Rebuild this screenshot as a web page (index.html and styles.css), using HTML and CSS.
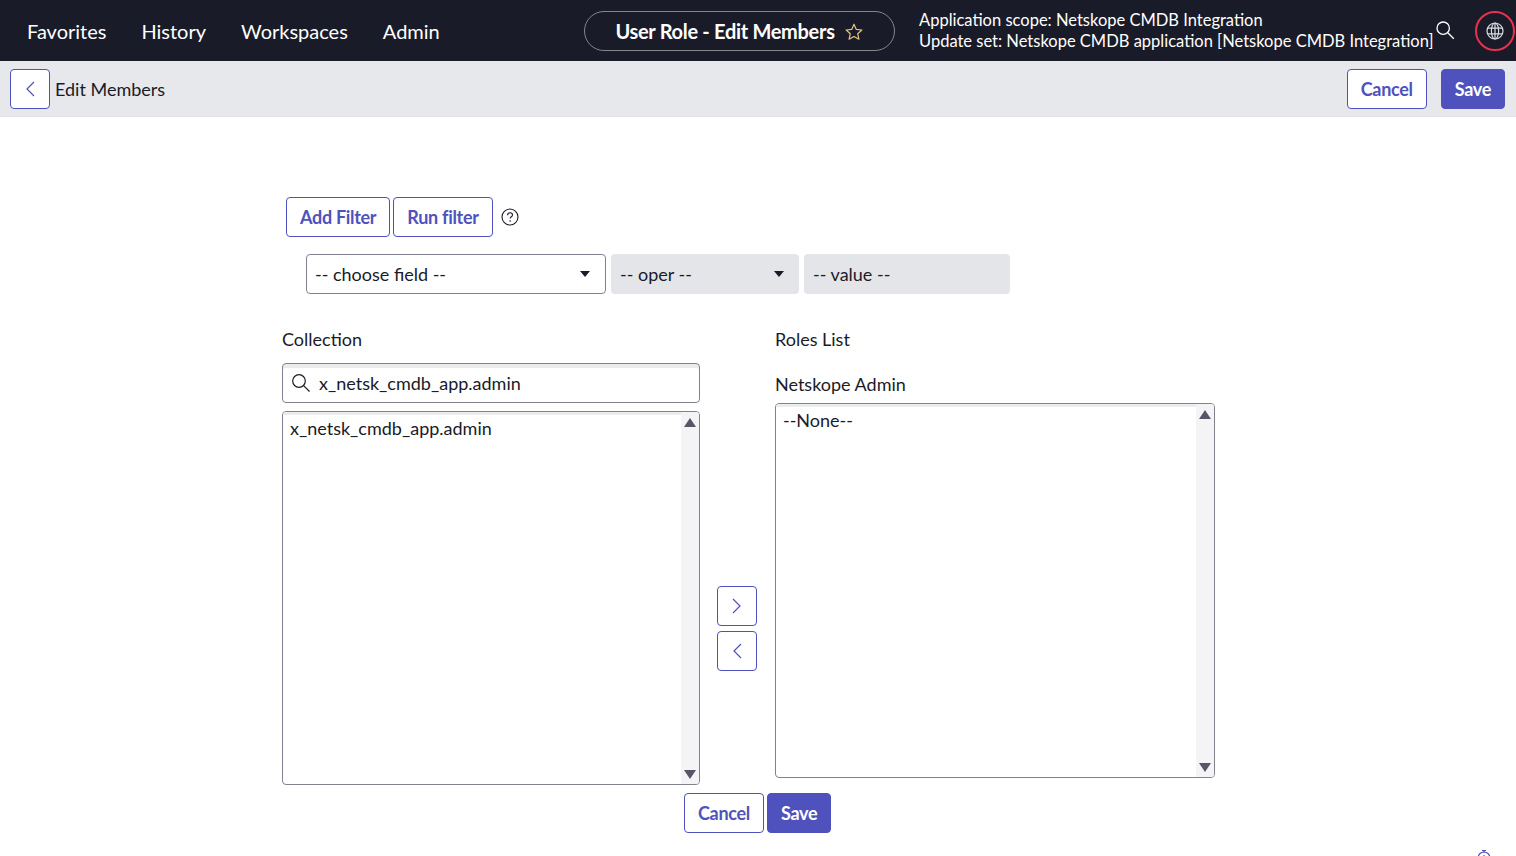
FILE: index.html
```html
<!DOCTYPE html>
<html lang="en">
<head>
    <meta charset="UTF-8">
    <meta name="viewport" content="width=device-width, initial-scale=1.0">
    <title>User Role - Edit Members</title>
    <link rel="stylesheet" href="styles.css">
</head>
<body>
    <header class="topbar">
        <nav class="topnav">
            <a class="topnav-item">Favorites</a>
            <a class="topnav-item">History</a>
            <a class="topnav-item">Workspaces</a>
            <a class="topnav-item">Admin</a>
        </nav>
        <div class="title-pill">
            <span>User Role - Edit Members</span>
            <svg class="star" width="20" height="20" viewBox="0 0 20 20"><path d="M10 2.2l2.3 5.2 5.6.6-4.2 3.7 1.2 5.5-4.9-2.8-4.9 2.8 1.2-5.5L2.1 8l5.6-.6z" fill="none" stroke="#e3c27e" stroke-width="1.2" stroke-linejoin="round"/></svg>
        </div>
        <div class="scope">
            <div>Application scope: Netskope CMDB Integration</div>
            <div>Update set: Netskope CMDB application [Netskope CMDB Integration]</div>
        </div>
        <svg class="top-search" width="20" height="20" viewBox="0 0 20 20"><circle cx="8.2" cy="8.2" r="6.2" fill="none" stroke="#fff" stroke-width="1.3"/><path d="M12.8 12.8l6 6" stroke="#fff" stroke-width="1.3"/></svg>
        <div class="globe-ring">
            <svg width="18" height="18" viewBox="0 0 18 18" fill="none" stroke="#dcdce0" stroke-width="1.2"><circle cx="9" cy="9" r="8"/><ellipse cx="9" cy="9" rx="3.6" ry="8"/><path d="M1.6 6.2h14.8M1.6 11.8h14.8M9 1v16"/></svg>
        </div>
    </header>

    <div class="subbar">
        <button class="btn btn-icon"><svg width="12" height="16" viewBox="0 0 12 16"><path d="M10 1L3 8l7 7" fill="none" stroke="#4f52bd" stroke-width="1.2"/></svg></button>
        <span class="subbar-title">Edit Members</span>
        <div class="subbar-actions">
            <button class="btn">Cancel</button>
            <button class="btn btn-primary">Save</button>
        </div>
    </div>

    <main class="content">
        <div class="filter-buttons">
            <button class="btn">Add Filter</button>
            <button class="btn">Run filter</button>
            <svg class="help" width="18" height="18" viewBox="0 0 18 18"><circle cx="9" cy="9" r="8" fill="none" stroke="#1a1b28" stroke-width="1.1"/><path d="M6.6 7.2c0-1.5 1.1-2.4 2.5-2.4s2.4.9 2.4 2.1c0 1.800-2.400 1.800-2.400 3.700" fill="none" stroke="#1a1b28" stroke-width="1.1"/><circle cx="9.100" cy="13" r=".8" fill="#1a1b28"/></svg>
        </div>

        <div class="filter-row">
            <div class="field field-choose"><span>-- choose field --</span><i class="caret"></i></div>
            <div class="field field-oper"><span>-- oper --</span><i class="caret"></i></div>
            <div class="field field-value"><span>-- value --</span></div>
        </div>

        <div class="slush">
            <div class="slush-col">
                <div class="slush-label">Collection</div>
                <div class="search-box">
                    <svg width="20" height="20" viewBox="0 0 20 20"><circle cx="8" cy="8" r="6.300" fill="none" stroke="#1a1b28" stroke-width="1.2"/><path d="M12.600 12.600l5.900 5.900" stroke="#1a1b28" stroke-width="1.2"/></svg>
                    <span>x_netsk_cmdb_app.admin</span>
                </div>
                <div class="listbox">
                    <div class="listbox-items">x_netsk_cmdb_app.admin</div>
                    <div class="scroll"><i class="arrow-up"></i><i class="arrow-down"></i></div>
                </div>
            </div>

            <div class="slush-move">
                <button class="btn btn-icon"><svg width="12" height="16" viewBox="0 0 12 16"><path d="M2 1l7 7-7 7" fill="none" stroke="#4f52bd" stroke-width="1.2"/></svg></button>
                <button class="btn btn-icon"><svg width="12" height="16" viewBox="0 0 12 16"><path d="M10 1L3 8l7 7" fill="none" stroke="#4f52bd" stroke-width="1.2"/></svg></button>
            </div>

            <div class="slush-col">
                <div class="slush-label">Roles List</div>
                <div class="slush-name">Netskope Admin</div>
                <div class="listbox listbox-tall">
                    <div class="listbox-items">--None--</div>
                    <div class="scroll"><i class="arrow-up"></i><i class="arrow-down"></i></div>
                </div>
            </div>
        </div>

        <div class="form-actions">
            <button class="btn">Cancel</button>
            <button class="btn btn-primary">Save</button>
        </div>
    </main>

    <svg class="timer" width="16" height="16" viewBox="0 0 16 16" fill="none" stroke="#4f52bd" stroke-width="1.200"><circle cx="8" cy="9" r="6"/><path d="M6 1.500h4M8 1.500v2M8 6v3"/></svg>
</body>
</html>
```

FILE: styles.css
```css
html, body {
    height: 100%;
    overflow: hidden;
}
body {
    margin: 0;
    font-family: Lato, "Open Sans", sans-serif;
    font-size: 18px;
    color: #1a1b28;
    background-color: #ffffff;
}
.topbar {
    display: flex;
    align-items: center;
    height: 61px;
    background-color: #1a1b28;
    color: #ffffff;
    padding-left: 27px;
    box-sizing: border-box;
}
.topnav {
    display: flex;
    gap: 35px;
    width: 557px;
    font-size: 20px;
}
.title-pill {
    display: flex;
    align-items: center;
    justify-content: center;
    gap: 9px;
    width: 311px;
    height: 40px;
    box-sizing: border-box;
    border: 1px solid #85858e;
    border-radius: 20px;
    font-size: 20px;
    font-weight: 700;
    letter-spacing: -0.3px;
}
.star {
    margin-top: 3px;
}
.scope {
    margin-left: 24px;
    width: 516px;
    font-size: 16.5px;
    line-height: 21px;
    white-space: nowrap;
}
.top-search {
    margin-top: -2px;
}
.globe-ring {
    display: flex;
    align-items: center;
    justify-content: center;
    flex: none;
    width: 40px;
    height: 40px;
    margin-left: 20px;
    box-sizing: border-box;
    border: 2px solid #e8314f;
    border-radius: 50%;
}
.subbar {
    display: flex;
    align-items: center;
    height: 56px;
    padding: 0 11px 0 10px;
    box-sizing: border-box;
    background-color: #e6e8ec;
    border-bottom: 1px solid #e0e2e6;
}
.subbar-title {
    margin-left: 5px;
}
.subbar-actions {
    display: flex;
    gap: 14px;
    margin-left: auto;
}
.btn {
    height: 40px;
    padding: 0 13px;
    box-sizing: border-box;
    background-color: #ffffff;
    border: 1px solid #4f52bd;
    border-radius: 4px;
    color: #4f52bd;
    font-family: inherit;
    font-size: 18px;
    font-weight: 700;
    letter-spacing: -0.3px;
}
.btn-primary {
    background-color: #4f52bd;
    color: #ffffff;
}
.btn-icon {
    display: flex;
    align-items: center;
    justify-content: center;
    width: 40px;
    padding: 0;
}
.content {
    padding: 80px 0 0 282px;
}
.filter-buttons {
    display: flex;
    align-items: center;
    gap: 3px;
    margin-left: 4px;
}
.help {
    margin-left: 5px;
}
.filter-row {
    display: flex;
    gap: 5px;
    margin: 17px 0 0 24px;
}
.field {
    display: flex;
    align-items: center;
    justify-content: space-between;
    height: 40px;
    padding: 0 15px 0 8px;
    box-sizing: border-box;
    border-radius: 4px;
    background-color: #e4e5e9;
}
.field-choose {
    width: 300px;
    background-color: #ffffff;
    border: 1px solid #80838f;
}
.field-oper {
    width: 188px;
    padding-left: 9px;
}
.field-value {
    width: 206px;
    padding-left: 9px;
}
.caret {
    width: 0;
    height: 0;
    border-left: 5.500px solid transparent;
    border-right: 5.500px solid transparent;
    border-top: 6px solid #1a1b28;
}
.slush {
    display: flex;
    margin-top: 33px;
}
.slush-col {
    display: flex;
    flex-direction: column;
}
.slush-col:first-child {
    width: 418px;
}
.slush-col:last-child {
    width: 440px;
}
.slush-label {
    height: 24px;
    line-height: 24px;
    margin-bottom: 12px;
}
.slush-name {
    height: 24px;
    line-height: 24px;
    margin: 9px 0 7px;
}
.search-box {
    display: flex;
    align-items: center;
    gap: 8px;
    height: 40px;
    padding-left: 8px;
    box-sizing: border-box;
    border: 1px solid #80838f;
    border-radius: 4px;
    box-shadow: inset 0 4px 0 #ececee;
}
.listbox {
    display: flex;
    height: 374px;
    margin-top: 8px;
    box-sizing: border-box;
    border: 1px solid #80838f;
    border-radius: 4px;
    overflow: hidden;
}
.listbox-tall {
    height: 375px;
    margin-top: 0;
}
.listbox-items {
    flex: 1;
    padding: 4px 7px;
    line-height: 24px;
    box-shadow: inset 0 3px 0 #ececee;
}
.scroll {
    display: flex;
    flex-direction: column;
    justify-content: space-between;
    align-items: center;
    width: 18px;
    padding: 6px 0 5px;
    box-sizing: border-box;
    background-color: #f4f4f7;
}
.arrow-up,
.arrow-down {
    width: 0;
    height: 0;
    border-left: 6px solid transparent;
    border-right: 6px solid transparent;
}
.arrow-up {
    border-bottom: 9px solid #565669;
}
.arrow-down {
    border-top: 9px solid #565669;
}
.slush-move {
    display: flex;
    flex-direction: column;
    justify-content: center;
    gap: 5px;
    width: 75px;
    padding: 144px 0 0 17px;
    box-sizing: border-box;
}
.form-actions {
    display: flex;
    gap: 3px;
    margin: 8px 0 0 402px;
}
.timer {
    position: fixed;
    right: 24px;
    bottom: -9px;
}
```
